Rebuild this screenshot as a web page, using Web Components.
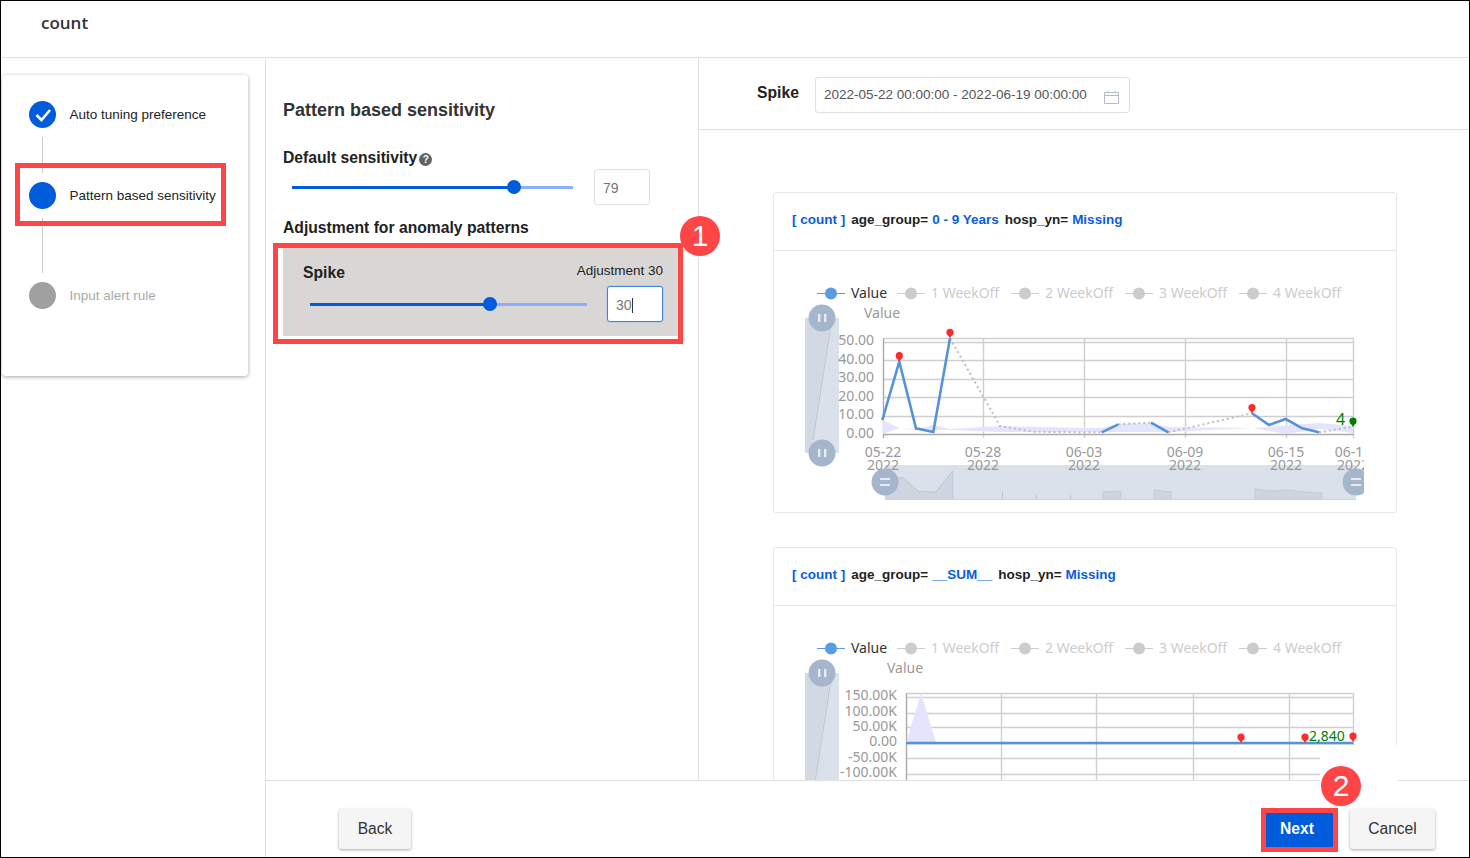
<!doctype html>
<html>
<head>
<meta charset="utf-8">
<title>count</title>
<style>
  html, body { margin: 0; padding: 0; }
  body { position: relative; width: 1470px; height: 858px; overflow: hidden; background: #fff; font-family: "Liberation Sans", Arial, sans-serif; color: #222; }
</style>
</head>
<body>
<rule-wizard>
  <span slot="title">count</span>
  <step-card slot="steps">
    <step-item state="done">Auto tuning preference</step-item>
    <step-item state="active" gap="36">Pattern based sensitivity</step-item>
    <step-item state="todo" gap="55">Input alert rule</step-item>
  </step-card>
  <sensitivity-panel slot="settings"></sensitivity-panel>
  <preview-panel slot="preview"></preview-panel>
  <plain-button slot="back" width="72">Back</plain-button>
  <plain-button slot="next" width="75" primary>Next</plain-button>
  <plain-button slot="cancel" width="85">Cancel</plain-button>
</rule-wizard>

<note-patch style="left:1320px;top:745px;width:78px;height:37px"></note-patch>
<note-frame style="left:15px;top:163px;width:211px;height:63px"></note-frame>
<note-frame style="left:273px;top:243px;width:410px;height:101px"></note-frame>
<note-frame style="left:1261px;top:808px;width:77px;height:44px"></note-frame>
<note-badge style="left:680px;top:216px">1</note-badge>
<note-badge style="left:1321px;top:766px">2</note-badge>

<script>
const BLUE = '#005cdb'
const TRACK = '#8caeff'

class RuleWizard extends HTMLElement {
  constructor() {
    super()
    this.attachShadow({ mode: 'open' }).innerHTML = `
      <style>
        :host { display: block; box-sizing: border-box; width: 1470px; height: 858px; border: 1px solid #000; }
        .head { box-sizing: border-box; height: 57px; padding: 11px 0 0 40px; border-bottom: 1px solid #e0e0e0; font: 600 17px/22px "Open Sans", sans-serif; color: #333; }
        .body { display: grid; grid-template-columns: 265px 1fr; height: 799px; }
        .left { border-right: 1px solid #e0e0e0; padding: 17px 0 0 1px; }
        .right { display: grid; grid-template-rows: 722px 77px; min-width: 0; }
        .top { display: grid; grid-template-columns: 433px 1fr; min-height: 0; }
        .top ::slotted([slot=settings]) { border-right: 1px solid #e0e0e0; }
        .foot { box-sizing: border-box; display: flex; align-items: flex-start; padding: 28px 34px 0 73px; border-top: 1px solid #e0e0e0; }
        .foot .end { margin-left: auto; display: flex; gap: 13px; }
      </style>
      <div class="head"><slot name="title"></slot></div>
      <div class="body">
        <div class="left"><slot name="steps"></slot></div>
        <div class="right">
          <div class="top"><slot name="settings"></slot><slot name="preview"></slot></div>
          <div class="foot">
            <slot name="back"></slot>
            <div class="end"><slot name="next"></slot><slot name="cancel"></slot></div>
          </div>
        </div>
      </div>
    `
  }
}

class StepCard extends HTMLElement {
  constructor() {
    super()
    this.attachShadow({ mode: 'open' }).innerHTML = `
      <style>
        :host { display: block; box-sizing: border-box; width: 246px; height: 301px; padding: 26px 0 0 27px; background: #fff; border-radius: 4px; box-shadow: 0 1px 4px rgba(0,0,0,.35); }
      </style>
      <slot></slot>
    `
  }
}

class StepItem extends HTMLElement {
  constructor() {
    super()
    const state = this.getAttribute('state')
    const gap = Number(this.getAttribute('gap') || 0)
    const fill = state === 'todo' ? '#a0a0a0' : BLUE
    const check = state === 'done'
      ? '<svg width="27" height="27" viewBox="0 0 27 27"><path d="M7.5 14l5 5 8.5-10" fill="none" stroke="#fff" stroke-width="2.6"/></svg>'
      : ''
    this.attachShadow({ mode: 'open' }).innerHTML = `
      <style>
        :host { display: block; }
        .line { width: 1px; height: ${gap}px; margin: 9px 0 9px 13px; background: #ccc; }
        .row { display: flex; align-items: center; gap: 13.5px; height: 27px; }
        .dot { flex: none; width: 27px; height: 27px; border-radius: 50%; background: ${fill}; }
        svg { display: block; }
        .text { padding-top: 1px; font: 13.5px/20px "Liberation Sans", Arial, sans-serif; color: ${state === 'todo' ? '#aaa' : '#222'}; }
      </style>
      ${gap ? '<div class="line"></div>' : ''}
      <div class="row"><div class="dot">${check}</div><div class="text"><slot></slot></div></div>
    `
  }
}

class SliderRow extends HTMLElement {
  constructor() {
    super()
    const pos = Number(this.getAttribute('pos'))
    const width = Number(this.getAttribute('track'))
    const focus = this.hasAttribute('focused')
    this.attachShadow({ mode: 'open' }).innerHTML = `
      <style>
        :host { display: flex; align-items: center; height: 36px; }
        .track { position: relative; width: ${width}px; height: 3px; background: ${TRACK}; }
        .fill { width: ${pos}%; height: 100%; background: ${BLUE}; }
        .thumb { position: absolute; left: ${pos}%; top: 50%; width: 14px; height: 14px; margin: -7px 0 0 -7px; border-radius: 50%; background: ${BLUE}; }
        .input { box-sizing: border-box; width: 56px; height: 36px; margin-left: auto; padding: 1px 0 0 8px; border-radius: 3px; font: 14px/34px "Liberation Sans", Arial, sans-serif; color: #777; background: ${focus ? '#fff' : 'transparent'}; border: 1px solid ${focus ? '#3f83e0' : '#e0e0e0'}; box-shadow: ${focus ? '0 0 0 1px #b9cdea' : 'none'}; }
        .caret { display: inline-block; width: 1px; height: 15px; background: #333; vertical-align: -3px; }
      </style>
      <div class="track"><div class="fill"></div><div class="thumb"></div></div>
      <div class="input">${this.getAttribute('value')}${focus ? '<span class="caret"></span>' : ''}</div>
    `
  }
}

class SensitivityPanel extends HTMLElement {
  constructor() {
    super()
    this.attachShadow({ mode: 'open' }).innerHTML = `
      <style>
        :host { display: block; box-sizing: border-box; height: 722px; padding: 40px 20px 0 17px; font-family: "Liberation Sans", Arial, sans-serif; color: #222; }
        h2 { margin: 0 0 26px; font: 700 18px/24px "Liberation Sans", Arial, sans-serif; color: #333; }
        .label { display: flex; align-items: center; gap: 2px; font: 700 15.7px/20px "Liberation Sans", Arial, sans-serif; }
        .help { width: 13px; height: 13px; margin-top: 2px; border-radius: 50%; background: #5f6368; color: #fff; font: 700 10px/13px "Liberation Sans", Arial, sans-serif; text-align: center; }
        .default { margin: 1px 0 13px; padding-left: 9px; width: 358px; }
        .box { box-sizing: border-box; height: 88px; margin-top: 10px; padding: 15px 15px 0 20px; background: #d9d7d6; }
        .box .top { display: flex; justify-content: space-between; margin-bottom: 3px; }
        .box .top span { font-size: 13.5px; line-height: 16px; }
        .box slider-row { margin-left: 7px; }
      </style>
      <h2>Pattern based sensitivity</h2>
      <div class="label">Default sensitivity<div class="help">?</div></div>
      <slider-row class="default" pos="79" track="281" value="79"></slider-row>
      <div class="label">Adjustment for anomaly patterns</div>
      <div class="box">
        <div class="top"><div class="label">Spike</div><span>Adjustment 30</span></div>
        <slider-row pos="65" track="277" value="30" focused></slider-row>
      </div>
    `
  }
}

class PreviewPanel extends HTMLElement {
  constructor() {
    super()
    this.attachShadow({ mode: 'open' }).innerHTML = `
      <style>
        :host { display: block; height: 722px; overflow: hidden; font-family: "Liberation Sans", Arial, sans-serif; }
        .bar { box-sizing: border-box; display: flex; align-items: center; height: 72px; padding: 2px 0 0 58px; border-bottom: 1px solid #e0e0e0; }
        .name { width: 58px; font: 700 15.7px/20px "Liberation Sans", Arial, sans-serif; color: #222; margin-top: -4px; }
        .date { box-sizing: border-box; display: flex; align-items: center; justify-content: space-between; width: 315px; height: 36px; padding: 0 10px 0 8px; border: 1px solid #e0e0e0; border-radius: 3px; font-size: 13.5px; color: #555; }
        .date svg { margin-top: 5px; }
        .list { padding: 62px 0 0 74px; }
        anomaly-card + anomaly-card { margin-top: 34px; }
      </style>
      <div class="bar">
        <div class="name">Spike</div>
        <div class="date">
          <span>2022-05-22 00:00:00 - 2022-06-19 00:00:00</span>
          <svg width="15" height="14" viewBox="0 0 15 14" fill="none" stroke="#b4bccb"><path d="M.5 2.5h14v11H.5zM.5 5.5h14M4 .5v3M11 .5v3"/></svg>
        </div>
      </div>
      <div class="list">
        <anomaly-card chart="age" group="0 - 9 Years"></anomaly-card>
        <anomaly-card chart="sum" group="__SUM__"></anomaly-card>
      </div>
    `
  }
}

class AnomalyCard extends HTMLElement {
  constructor() {
    super()
    this.attachShadow({ mode: 'open' }).innerHTML = `
      <style>
        :host { display: block; box-sizing: border-box; width: 624px; height: 321px; border: 1px solid #e8e8e8; border-radius: 3px; }
        .title { box-sizing: border-box; height: 58px; padding: 17px 0 0 18px; border-bottom: 1px solid #e8e8e8; font: 700 13.5px/20px "Liberation Sans", Arial, sans-serif; color: #222; white-space: nowrap; }
        b { color: #0a5ce0; font-weight: 700; }
        .k { margin-left: 6px; }
        .v { margin-left: 4px; }
      </style>
      <div class="title"><b>[ count ]</b><span class="k">age_group=</span><b class="v">${this.getAttribute('group')}</b><span class="k">hosp_yn=</span><b class="v">Missing</b></div>
      <trend-chart kind="${this.getAttribute('chart')}"></trend-chart>
    `
  }
}

// chart geometry is written in page coordinates, the viewBox moves it into the card
const CHARTS = {
  age: {
    top: 251,
    legendY: 293,
    titleX: 882,
    titleY: 313,
    labelX: 874,
    left: 883,
    axisY: 434,
    gridEnd: 438,
    grid: [338.5, 342.5, 360.5, 379.5, 397.5, 416.5],
    verticals: [983.5, 1084.5, 1185.5, 1286.5, 1353.5],
    yLabels: [['50.00', 345], ['40.00', 364], ['30.00', 382], ['20.00', 401], ['10.00', 419], ['0.00', 438]],
    xLabels: [[883, '05-22'], [983, '05-28'], [1084, '06-03'], [1185, '06-09'], [1286, '06-15'], [1353, '06-19']],
    band: '883,420 899,428 916,429 933,425 950,429 1000,426 1085,428 1102,428 1118,424 1151,423 1168,427 1253,428 1319,423 1353,426 1353,433 1319,429 1286,434 1253,428 1168,432 1100,432 1000,432 950,430 916,430 899,428 883,434',
    solid: [
      '882.3,420 899.3,361.7 916,428.3 933.3,432 950,338.3',
      '1101.7,432.3 1118.3,424.3',
      '1151,422.7 1168.3,432.3',
      '1252,413.3 1269,425 1285.7,419 1302.3,428.3 1319,432.3'
    ],
    dotted: [
      '950,338.3 983.3,396.7 1000,426 1033.3,431.7 1085,432.3 1101.7,432.3',
      '1118.3,424.3 1151,422.7',
      '1168.3,432.3 1252,413.3',
      '1319,432.3 1353.3,426.7'
    ],
    pins: [[899.3, 361.7, '#ff2a2a'], [950, 338.3, '#ff2a2a'], [1252, 413.6, '#ff2a2a'], [1353, 427, '#008000']],
    peak: { text: '4', x: 1336, y: 425, size: 16 },
    sideTop: 318,
    sideEnd: 453,
    brush: true
  },
  sum: {
    top: 606,
    legendY: 648,
    titleX: 905,
    titleY: 668,
    labelX: 897,
    left: 906,
    axisY: 743,
    gridEnd: 790,
    grid: [693.5, 697.5, 713.5, 727.5, 758.5, 774.5],
    verticals: [1001.5, 1096.5, 1193.5, 1289.5, 1353.5],
    yLabels: [['150.00K', 700], ['100.00K', 716], ['50.00K', 731], ['0.00', 746], ['-50.00K', 762], ['-100.00K', 777]],
    xLabels: [],
    band: '906,743 921,693 936,743',
    solid: ['906,743 1353,743'],
    dotted: [],
    pins: [[1241, 743, '#ff2a2a'], [1305, 743, '#ff2a2a'], [1353, 742, '#ff2a2a']],
    peak: { text: '2,840', x: 1309, y: 741, size: 14 },
    sideTop: 673,
    sideEnd: 808,
    brush: false
  }
}

const LEGEND = [
  ['Value', 817, '#5b9bdf', '#333'],
  ['1 WeekOff', 897, '#ccc', '#ccc'],
  ['2 WeekOff', 1011, '#ccc', '#ccc'],
  ['3 WeekOff', 1125, '#ccc', '#ccc'],
  ['4 WeekOff', 1239, '#ccc', '#ccc']
]

function handle(cx, cy, upright) {
  const bars = upright
    ? `<rect x="${cx - 4}" y="${cy - 4}" width="2.4" height="8"/><rect x="${cx + 2}" y="${cy - 4}" width="2.4" height="8"/>`
    : `<rect x="${cx - 5}" y="${cy - 4}" width="10" height="2"/><rect x="${cx - 5}" y="${cy + 2}" width="10" height="2"/>`
  return `<circle cx="${cx}" cy="${cy}" r="13.5" fill="#a5b5cc"/><g fill="#fff" opacity=".75">${bars}</g>`
}

function pin([x, tip, fill]) {
  return `<circle cx="${x}" cy="${tip - 6}" r="3.6" fill="${fill}"/><path d="M${x - 3} ${tip - 4.5}L${x} ${tip}L${x + 3} ${tip - 4.5}z" fill="${fill}"/>`
}

function chartMarkup(c) {
  const legend = LEGEND.map(([name, x, dot, ink]) => `
    <path d="M${x} ${c.legendY + .5}h28" stroke="${dot}"/>
    <circle cx="${x + 14}" cy="${c.legendY + .5}" r="6" fill="${dot}"/>
    <text x="${x + 34}" y="${c.legendY + 5}" fill="${ink}">${name}</text>`).join('')
  const grid = c.grid.map((y) => `<path d="M${c.left} ${y}H1354"/>`).join('')
  const verticals = c.verticals.map((x) => `<path d="M${x} ${c.grid[0]}V${c.gridEnd}"/>`).join('')
  const yLabels = c.yLabels.map(([t, y]) => `<text x="${c.labelX}" y="${y}" text-anchor="end">${t}</text>`).join('')
  const xLabels = c.xLabels.map(([x, t]) => `
    <text x="${x}" y="457" text-anchor="middle">${t}</text>
    <text x="${x}" y="470" text-anchor="middle">2022</text>`).join('')
  const solid = c.solid.map((p) => `<polyline points="${p}" fill="none" stroke="#5592d8" stroke-width="2.6"/>`).join('')
  const dotted = c.dotted.map((p) => `<polyline points="${p}" fill="none" stroke="#bdbdbd" stroke-width="2" stroke-dasharray="2 3"/>`).join('')
  const brush = c.brush ? `
    <rect x="885" y="465" width="471" height="34" fill="#dbe1ea"/>
    <path d="M885 499V482L902 477 919 491.7 935.7 492 952.7 471V499z" fill="#ced5e0"/>
    <path d="M885 482L902 477 919 491.7 935.7 492 952.7 471V499" fill="none" stroke="#bcc5d2"/>
    <path d="M1103 499V492L1120.7 491V499zM1154 499V490L1171 492V499zM1255 499V489L1272 491 1288 490 1305 492 1322 493V499z" fill="#ced5e0" stroke="#c4ccd8"/>
    <path d="M1002.5 491V499M1036.5 495V499M1070.5 495V499" stroke="#bcc5d2"/>
    <path d="M885 499.5H1356" stroke="#cfd3da"/>` : ''
  const brushHandles = c.brush ? handle(885, 482, false) + handle(1356, 482, false) : ''
  return `
    <svg width="622" height="261" viewBox="774 ${c.top} 622 261">
      <defs><clipPath id="plot"><rect x="774" y="${c.top}" width="590" height="261"/></clipPath></defs>
      <g clip-path="url(#plot)">
        ${brush}
        <g class="txt">${legend}</g>
        <rect x="805" y="${c.sideTop}" width="34" height="${c.sideEnd - c.sideTop}" fill="#dbe1ea"/>
        <path d="M805 ${c.sideTop}H831L813 ${c.sideEnd - 13}V${c.sideEnd}H805z" fill="#d2d9e3"/>
        <path d="M831 ${c.sideTop + 7}L813 ${c.sideEnd - 13}" stroke="#bcc5d2" fill="none"/>
        ${handle(822, c.sideTop, true)}${handle(822, c.sideEnd, true)}
        <g class="txt axis">
          <text x="${c.titleX}" y="${c.titleY + 5}" text-anchor="middle">Value</text>
          ${yLabels}${xLabels}
        </g>
        <g stroke="#cfcfcf" stroke-width="1.4" fill="none">${grid}${verticals}</g>
        <path d="M${c.left + .5} ${c.grid[0]}V${c.gridEnd}M${c.left} ${c.axisY + .5}H1354" stroke="#aaa" stroke-width="1.4" fill="none"/>
        <polygon points="${c.band}" fill="#e4e4ff"/>
        ${dotted}${solid}${c.pins.map(pin).join('')}
        <text x="${c.peak.x}" y="${c.peak.y}" fill="#008000" style="font-size:${c.peak.size}px">${c.peak.text}</text>
        ${brushHandles}
      </g>
    </svg>
  `
}

class TrendChart extends HTMLElement {
  constructor() {
    super()
    this.attachShadow({ mode: 'open' }).innerHTML = `
      <style>
        :host { display: block; height: 261px; }
        svg { display: block; }
        text { font: 14px "Noto Sans", "Open Sans", sans-serif; }
        .axis text { fill: #999; }
      </style>
      ${chartMarkup(CHARTS[this.getAttribute('kind')])}
    `
  }
}

class PlainButton extends HTMLElement {
  constructor() {
    super()
    const primary = this.hasAttribute('primary')
    this.attachShadow({ mode: 'open' }).innerHTML = `
      <style>
        :host { display: block; }
        button { box-sizing: border-box; width: ${this.getAttribute('width')}px; height: 40px; padding: 0 ${primary ? 5 : 0}px 0 0; border: 0; border-radius: 3px; cursor: pointer; font: ${primary ? 700 : 400} 15.6px "Liberation Sans", Arial, sans-serif; color: ${primary ? '#fff' : '#333'}; background: ${primary ? BLUE : '#f5f5f5'}; box-shadow: ${primary ? 'none' : '0 1px 3px rgba(0,0,0,.35)'}; }
      </style>
      <button><slot></slot></button>
    `
  }
}

class NoteFrame extends HTMLElement {
  constructor() {
    super()
    this.attachShadow({ mode: 'open' }).innerHTML = `
      <style>:host { position: absolute; box-sizing: border-box; border: 5px solid #ff4545; }</style>
    `
  }
}

class NotePatch extends HTMLElement {
  constructor() {
    super()
    this.attachShadow({ mode: 'open' }).innerHTML = `
      <style>:host { position: absolute; background: #fff; }</style>
    `
  }
}

class NoteBadge extends HTMLElement {
  constructor() {
    super()
    this.attachShadow({ mode: 'open' }).innerHTML = `
      <style>
        :host { position: absolute; width: 40px; height: 40px; border-radius: 50%; background: #ff4545; color: #fff; font: 30px/40px "Liberation Sans", Arial, sans-serif; text-align: center; }
      </style>
      <slot></slot>
    `
  }
}

// children first, so that nested elements exist when a parent builds its shadow root
customElements.define('slider-row', SliderRow)
customElements.define('trend-chart', TrendChart)
customElements.define('anomaly-card', AnomalyCard)
customElements.define('step-item', StepItem)
customElements.define('step-card', StepCard)
customElements.define('plain-button', PlainButton)
customElements.define('sensitivity-panel', SensitivityPanel)
customElements.define('preview-panel', PreviewPanel)
customElements.define('rule-wizard', RuleWizard)
customElements.define('note-frame', NoteFrame)
customElements.define('note-patch', NotePatch)
customElements.define('note-badge', NoteBadge)
</script>
</body>
</html>
